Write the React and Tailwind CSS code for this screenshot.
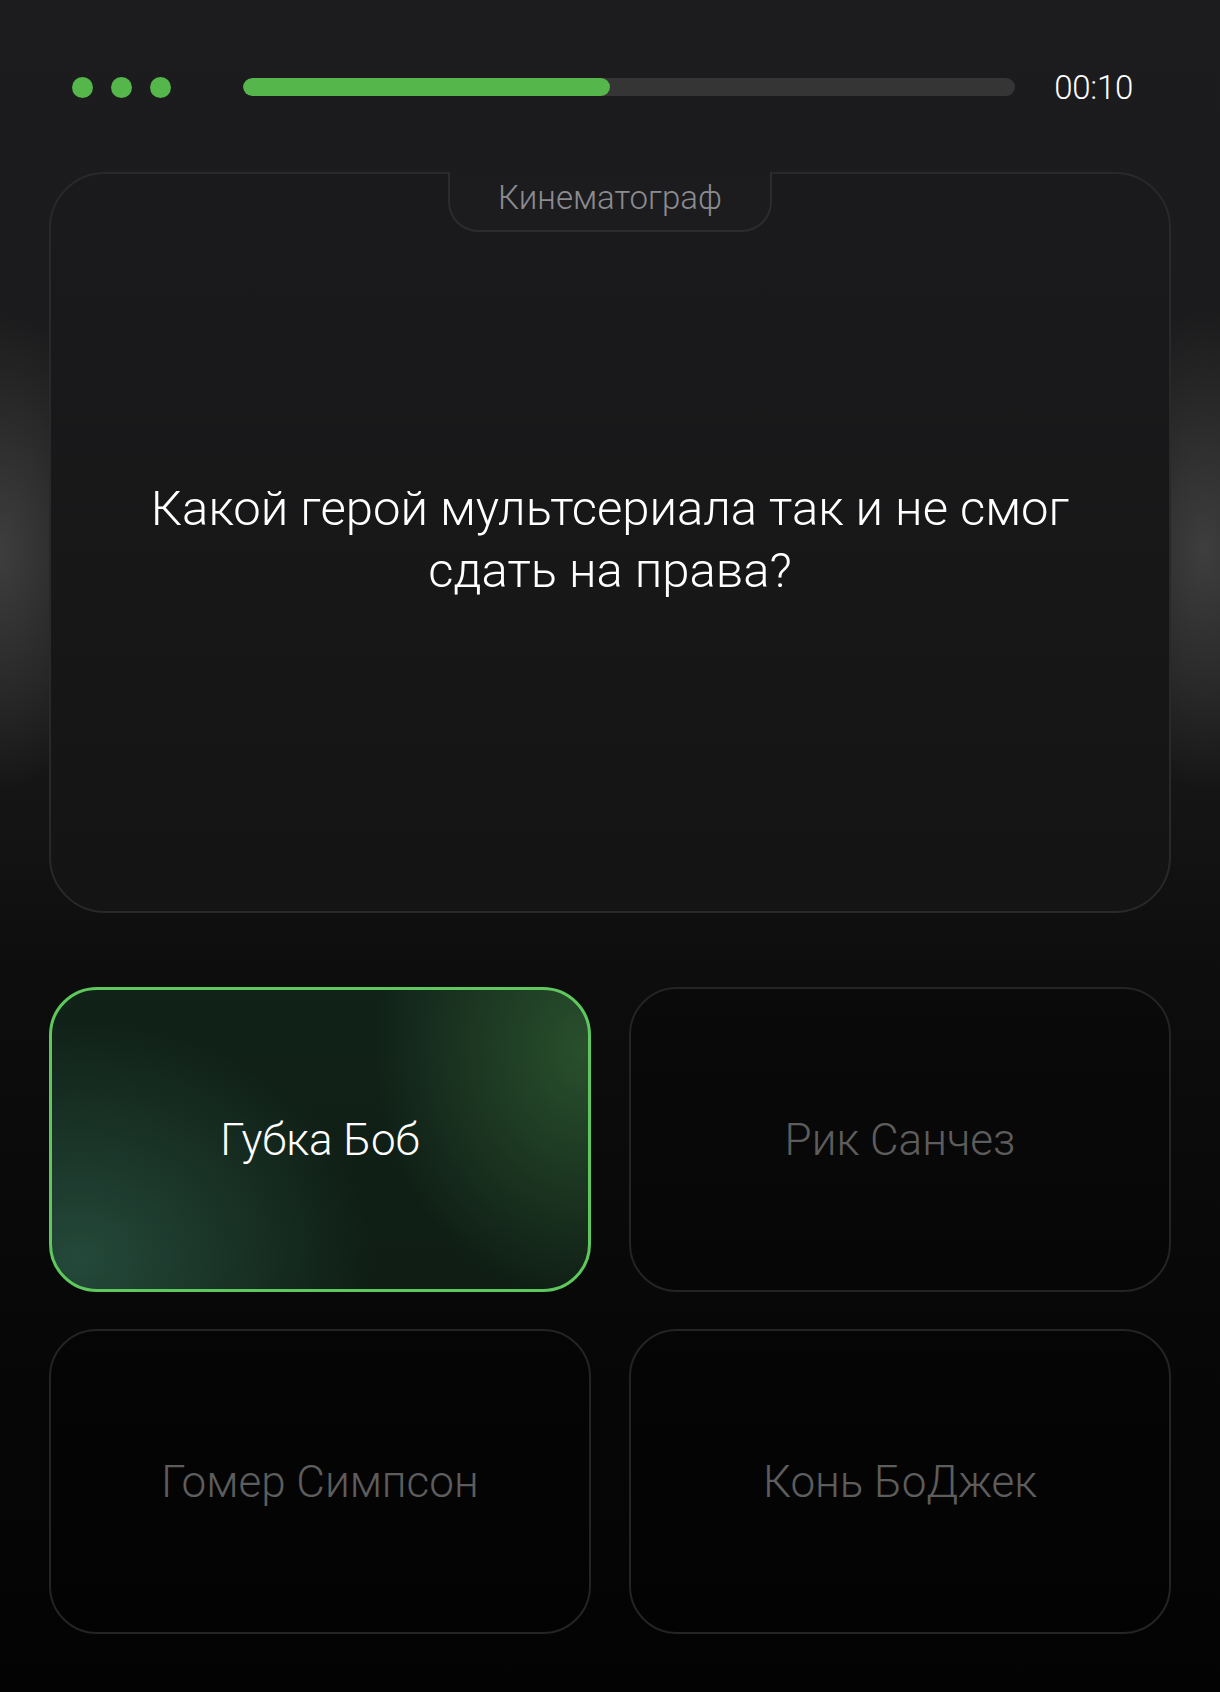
const answers = [
  { label: "Губка Боб", selected: true },
  { label: "Рик Санчез" },
  { label: "Гомер Симпсон" },
  { label: "Конь БоДжек" },
];

function Header() {
  return (
    <div className="flex items-center h-[40px] mt-[67px] pl-[72px] pr-[87px]">
      <div className="flex gap-[18px]">
        {[1, 2, 3].map((i) => (
          <div key={i} className="w-[21px] h-[21px] rounded-full bg-[#54b64b]" />
        ))}
      </div>
      <div className="flex-1 ml-[72px] h-[18px] rounded-full bg-[#353535] overflow-hidden">
        <div className="h-full w-[47.5%] rounded-full bg-[#54b64b]" />
      </div>
      <div className="ml-[39px] text-[33px] leading-none font-light text-white tracking-[-0.3px]">00:10</div>
    </div>
  );
}

function QuestionCard() {
  return (
    <div className="relative mt-[65px] h-[741px] rounded-[56px] border-2 border-[#29292b] bg-[image:linear-gradient(to_bottom,#1a1a1c,#171718_60%,#141414)] flex items-center justify-center">
      <div className="absolute left-1/2 -translate-x-1/2 top-[-2px] w-[324px] h-[60px] rounded-b-[30px] border-2 border-t-0 border-[#2c2c2e] bg-[#1c1c1e] flex justify-center pt-[7px]">
        <span className="text-[33px] leading-[38px] font-light text-[#8b8b90]">Кинематограф</span>
      </div>
      <p className="text-center text-[49px] leading-[62px] font-light text-white mt-[-6px]">
        Какой герой мультсериала так и не смог
        <br />
        сдать на права?
      </p>
    </div>
  );
}

function Answer({ label, selected }) {
  if (selected) {
    return (
      <div className="h-[305px] rounded-[48px] border-[3px] border-[#5fc85c] bg-[image:radial-gradient(ellipse_55%_80%_at_5%_90%,#24493a,transparent),radial-gradient(ellipse_40%_85%_at_100%_20%,#29502d,transparent),linear-gradient(to_bottom,#112219,#0f1d14)] flex items-center justify-center">
        <span className="text-[44px] font-light text-white">{label}</span>
      </div>
    );
  }
  return (
    <div className="h-[305px] rounded-[48px] border-2 border-[#242424] bg-black/20 flex items-center justify-center">
      <span className="text-[44px] font-light text-[#5d5d5d]">{label}</span>
    </div>
  );
}

export default function App() {
  return (
    <div
      className="relative w-full h-[1692px] overflow-hidden bg-[image:radial-gradient(ellipse_120px_240px_at_0px_550px,#3e3e3e,transparent),radial-gradient(ellipse_120px_240px_at_1205px_550px,#3e3e3e,transparent),linear-gradient(to_bottom,#1c1c1e,#1a1a1b_40%,#0d0d0d_58%,#070707_80%,#030303)]"
      style={{ fontFamily: "Roboto, 'Noto Sans', sans-serif" }}
    >
      <Header />
      <div className="px-[49px]">
        <QuestionCard />
        <div className="grid grid-cols-2 gap-x-[38px] gap-y-[37px] mt-[74px]">
          {answers.map((a) => (
            <Answer key={a.label} {...a} />
          ))}
        </div>
      </div>
    </div>
  );
}
